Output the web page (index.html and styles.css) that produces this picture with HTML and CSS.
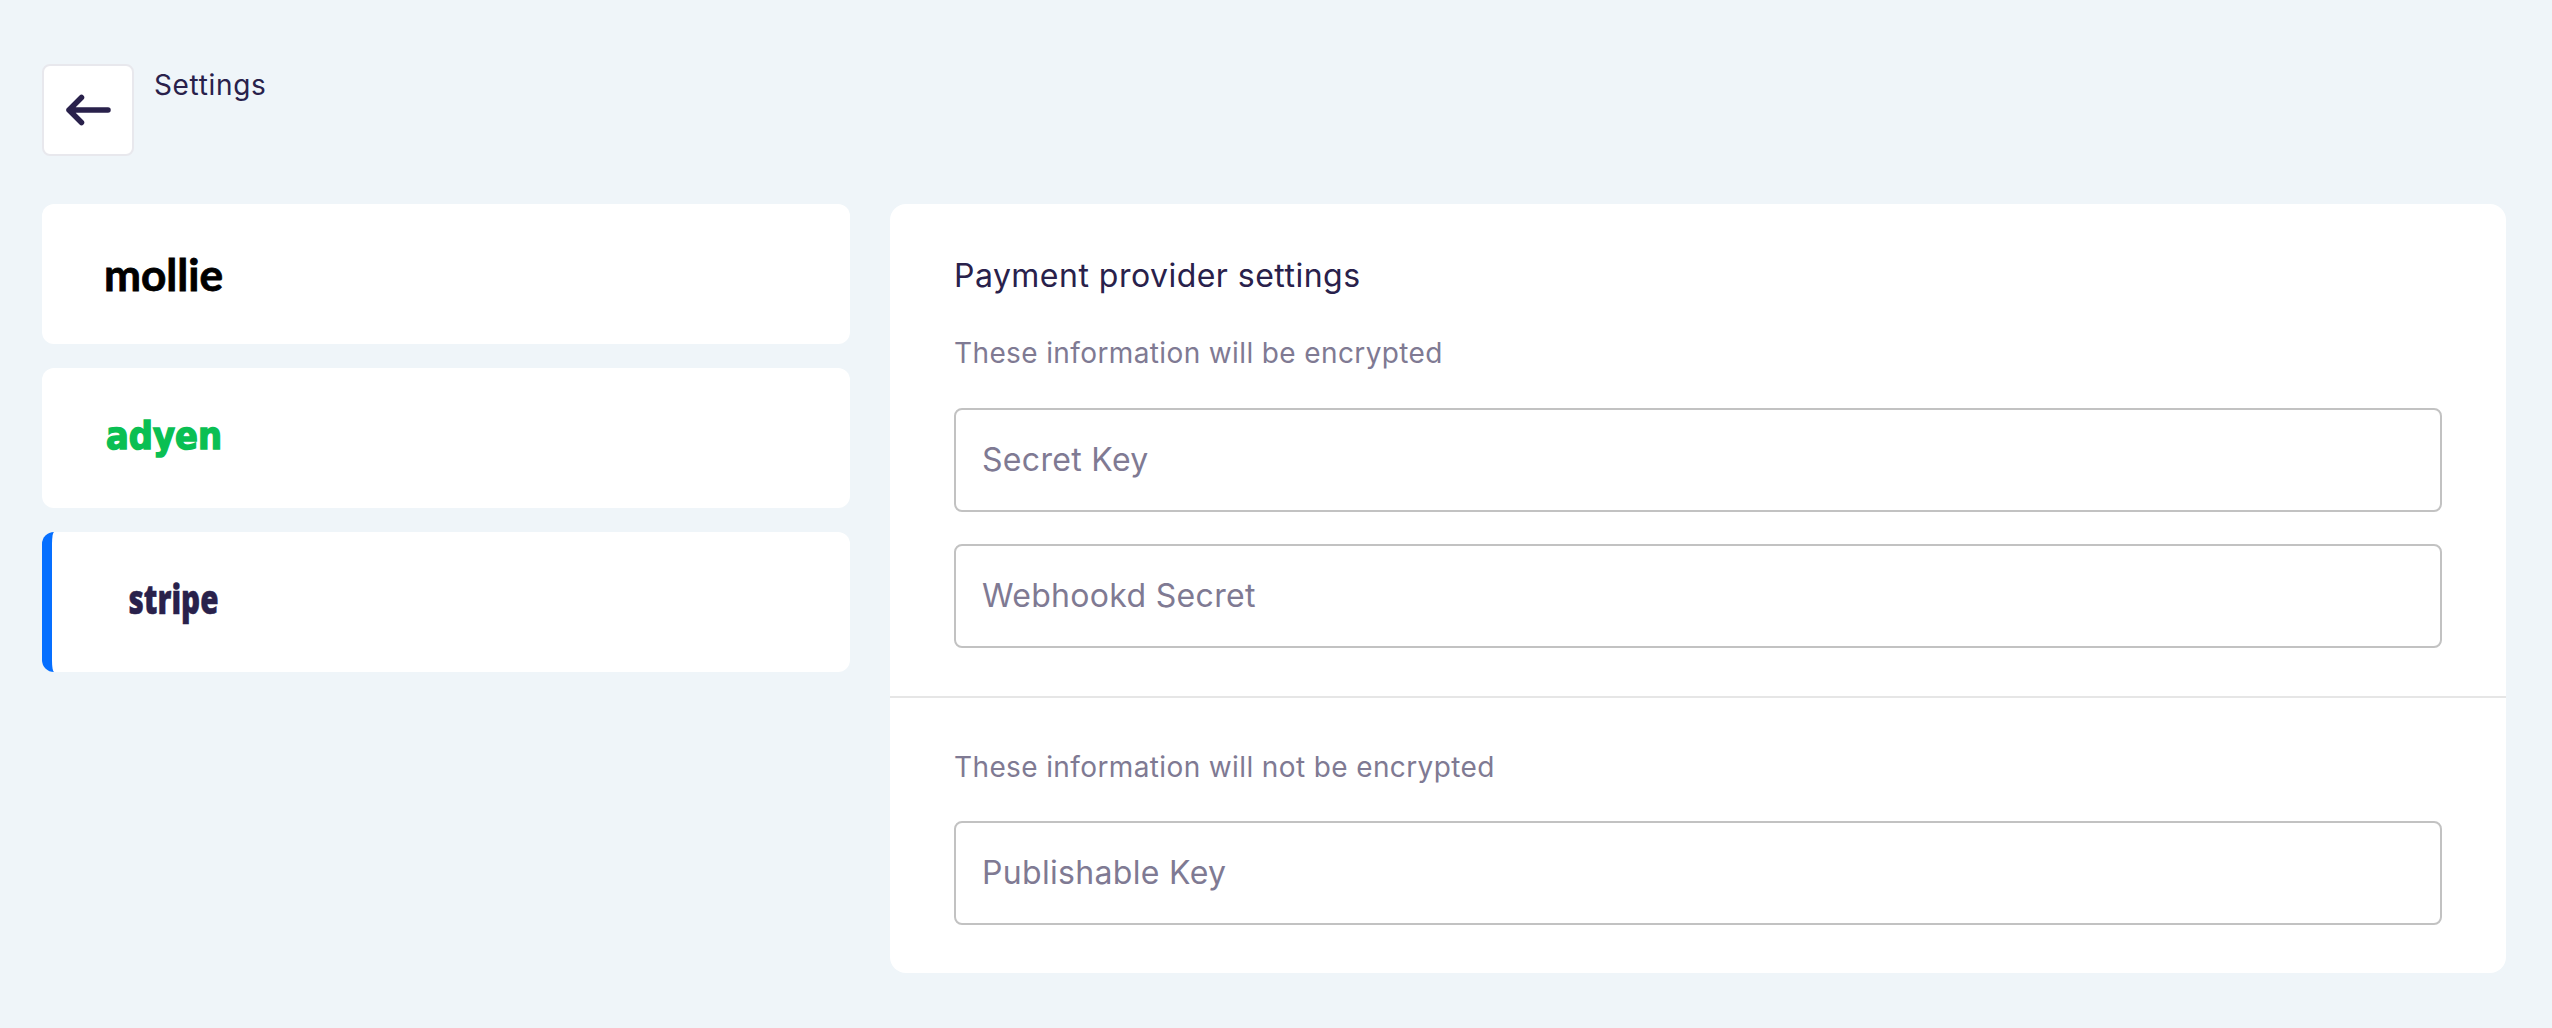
FILE: index.html
```html
<!DOCTYPE html>
<html lang="en">
<head>
<meta charset="utf-8">
<title>Settings</title>
<link rel="stylesheet" href="styles.css">
</head>
<body>
<header class="page-header">
  <button class="back" type="button" aria-label="Back">
    <svg width="48" height="36" viewBox="0 0 48 36" fill="none" stroke="currentColor" stroke-width="5.500" stroke-linecap="round" stroke-linejoin="round"><path d="M44 18H5M17.500 5.500L5 18L17.500 30.500"/></svg>
  </button>
  <h1 class="page-title">Settings</h1>
</header>
<main class="content">
  <nav class="providers">
    <a class="provider">
      <svg class="logo" width="116" height="56" viewBox="0 0 116 56"><text class="mollie" x="-2" y="45" textLength="119" lengthAdjust="spacingAndGlyphs">mollie</text></svg>
    </a>
    <a class="provider">
      <svg class="logo" width="116" height="56" viewBox="0 0 116 56"><text class="adyen" x="0" y="38.500" textLength="116" lengthAdjust="spacingAndGlyphs">adyen</text></svg>
    </a>
    <a class="provider active">
      <svg class="logo" width="116" height="56" viewBox="0 0 116 56"><text class="stripe" x="12.500" y="39.500" textLength="90" lengthAdjust="spacingAndGlyphs">stripe</text></svg>
    </a>
  </nav>
  <form class="panel">
    <section class="section">
      <h2 class="panel-title">Payment provider settings</h2>
      <p class="hint">These information will be encrypted</p>
      <div class="fields">
        <input class="field" type="text" placeholder="Secret Key">
        <input class="field" type="text" placeholder="Webhookd Secret">
      </div>
    </section>
    <section class="section">
      <p class="hint">These information will not be encrypted</p>
      <input class="field" type="text" placeholder="Publishable Key">
    </section>
  </form>
</main>
</body>
</html>
```
FILE: styles.css
```css
* { box-sizing: border-box; }
body {
  margin: 0;
  min-height: 1028px;
  padding: 64px 46px 0 42px;
  background: #eff5f9;
  color: #29214b;
  font-family: Inter, "Liberation Sans", sans-serif;
}
h1, h2, p { margin: 0; font-weight: 400; }
.page-header { display: flex; align-items: flex-start; gap: 20px; height: 92px; margin-bottom: 48px; }
.back {
  display: flex;
  align-items: center;
  justify-content: center;
  width: 92px;
  height: 92px;
  padding: 0;
  border: 2px solid #e8e8ed;
  border-radius: 8px;
  background: #fff;
  color: #29214b;
}
.page-title { font-size: 28px; line-height: 42px; letter-spacing: .65px; }
.content { display: grid; grid-template-columns: 808px 1616px; gap: 40px; align-items: start; }
.providers { display: grid; gap: 24px; }
.provider {
  display: flex;
  align-items: center;
  height: 140px;
  padding-left: 64px;
  border-radius: 12px;
  background: #fff;
}
.provider.active { border-left: 10px solid #066fff; }
.logo { overflow: visible; }
.mollie { font: 700 44px Lato, sans-serif; fill: #000; stroke: #000; stroke-width: .8; }
.adyen { font: 700 37px "DejaVu Sans", sans-serif; fill: #0abf53; stroke: #0abf53; stroke-width: 1.5; }
.stripe { font: 800 40px "Open Sans", sans-serif; fill: #29214b; stroke: #29214b; stroke-width: .5; }
.panel { border-radius: 16px; background: #fff; }
.section { padding: 48px 64px; }
.section + .section { border-top: 2px solid #e6e6e6; }
.panel-title { margin-bottom: 32px; font-size: 32px; line-height: 48px; letter-spacing: .48px; }
.hint { margin-bottom: 33px; font-size: 28px; line-height: 42px; letter-spacing: .38px; color: #7f7a93; }
.panel-title + .hint { line-height: 43px; }
.fields { display: grid; gap: 32px; }
.field {
  display: block;
  width: 100%;
  height: 104px;
  padding: 0 26px 1px;
  border: 2px solid #c2c2c2;
  border-radius: 8px;
  background: #fff;
  font: inherit;
  font-size: 32px;
  letter-spacing: .32px;
  color: #29214b;
}
.field::placeholder { color: #7f7a93; opacity: 1; }
```
